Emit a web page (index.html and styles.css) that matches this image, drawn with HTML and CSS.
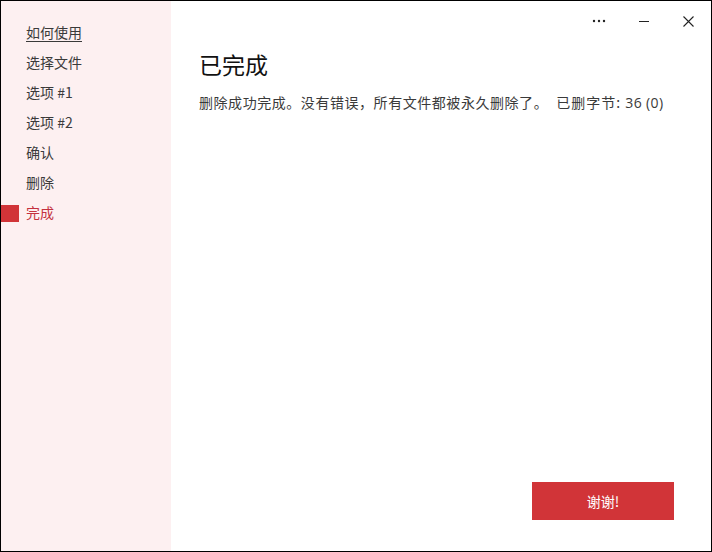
FILE: index.html
```html
<!DOCTYPE html>
<html lang="zh-CN">
<head>
<meta charset="utf-8">
<title>已完成</title>
<link rel="stylesheet" href="styles.css">
</head>
<body>
<div class="window">
  <nav class="sidebar">
    <ul class="steps">
      <li class="step link">如何使用</li>
      <li class="step">选择文件</li>
      <li class="step">选项 #1</li>
      <li class="step">选项 #2</li>
      <li class="step">确认</li>
      <li class="step">删除</li>
      <li class="step active">完成</li>
    </ul>
  </nav>
  <main class="main">
    <div class="titlebar">
      <button class="tb-btn" aria-label="更多">
        <svg width="14" height="4" viewBox="0 0 14 4"><circle cx="2" cy="2" r="1.2" fill="#222"/><circle cx="7" cy="2" r="1.2" fill="#222"/><circle cx="12" cy="2" r="1.2" fill="#222"/></svg>
      </button>
      <button class="tb-btn" aria-label="最小化">
        <svg width="10" height="10" viewBox="0 0 10 10"><line x1="0" y1="5.5" x2="10" y2="5.5" stroke="#222" stroke-width="1"/></svg>
      </button>
      <button class="tb-btn" aria-label="关闭">
        <svg width="11" height="11" viewBox="0 0 11 11"><path d="M0.5 0.5 L10.5 10.5 M10.5 0.5 L0.5 10.5" stroke="#222" stroke-width="1.1" fill="none"/></svg>
      </button>
    </div>
    <div class="content">
      <h1 class="title">已完成</h1>
      <p class="message">删除成功完成。没有错误，所有文件都被永久删除了。<span class="stat">已删字节: <span class="num">36 (0)</span></span></p>
    </div>
    <div class="actions">
      <button class="primary">谢谢!</button>
    </div>
  </main>
</div>
</body>
</html>
```

FILE: styles.css
```css
* { box-sizing: border-box; }
html, body { margin: 0; padding: 0; background: #fff; }
body {
  font-family: "Noto Sans CJK SC", "Noto Sans", sans-serif;
  color: #222;
}
.window {
  width: 712px;
  height: 552px;
  border: 1px solid #000;
  display: flex;
  background: #fff;
}
.sidebar {
  width: 170px;
  flex: none;
  background: #fdf0f1;
  padding-top: 16px;
}
.steps {
  list-style: none;
  margin: 0;
  padding: 0;
}
.step {
  position: relative;
  height: 30px;
  line-height: 30px;
  padding-left: 25px;
  font-size: 14px;
  color: #3a3a3a;
}
.step.link { text-decoration: underline; text-underline-offset: 3px; text-decoration-thickness: 1px; }
.step.active { color: #c4313f; }
.step.active::before {
  content: "";
  position: absolute;
  left: 0;
  top: 8px;
  width: 18px;
  height: 17px;
  background: #d13438;
}
.main {
  flex: 1;
  display: flex;
  flex-direction: column;
}
.titlebar {
  height: 40px;
  display: flex;
  justify-content: flex-end;
}
.tb-btn {
  width: 45px;
  height: 40px;
  border: 0;
  background: transparent;
  padding: 0;
  display: flex;
  align-items: center;
  justify-content: center;
}
.content { padding-left: 28px; }
.title {
  margin: 8px 0 0;
  font-size: 23px;
  font-weight: normal;
  line-height: 30px;
  color: #111;
}
.message {
  margin: 13px 0 0;
  font-size: 14px;
  line-height: 20px;
  letter-spacing: 0.55px;
  color: #3a3a3a;
}
.stat { margin-left: 8px; letter-spacing: 1px; }
.num {
  font-family: "Open Sans", "Noto Sans", sans-serif;
  font-size: 14px;
  letter-spacing: 0.4px;
}
.actions {
  margin-top: auto;
  display: flex;
  justify-content: flex-end;
  padding: 0 37px 31px 0;
}
.primary {
  width: 142px;
  height: 38px;
  border: 0;
  background: #d13438;
  color: #fff;
  font-family: "Noto Sans CJK SC", "Noto Sans", sans-serif;
  font-size: 14px;
}
```
